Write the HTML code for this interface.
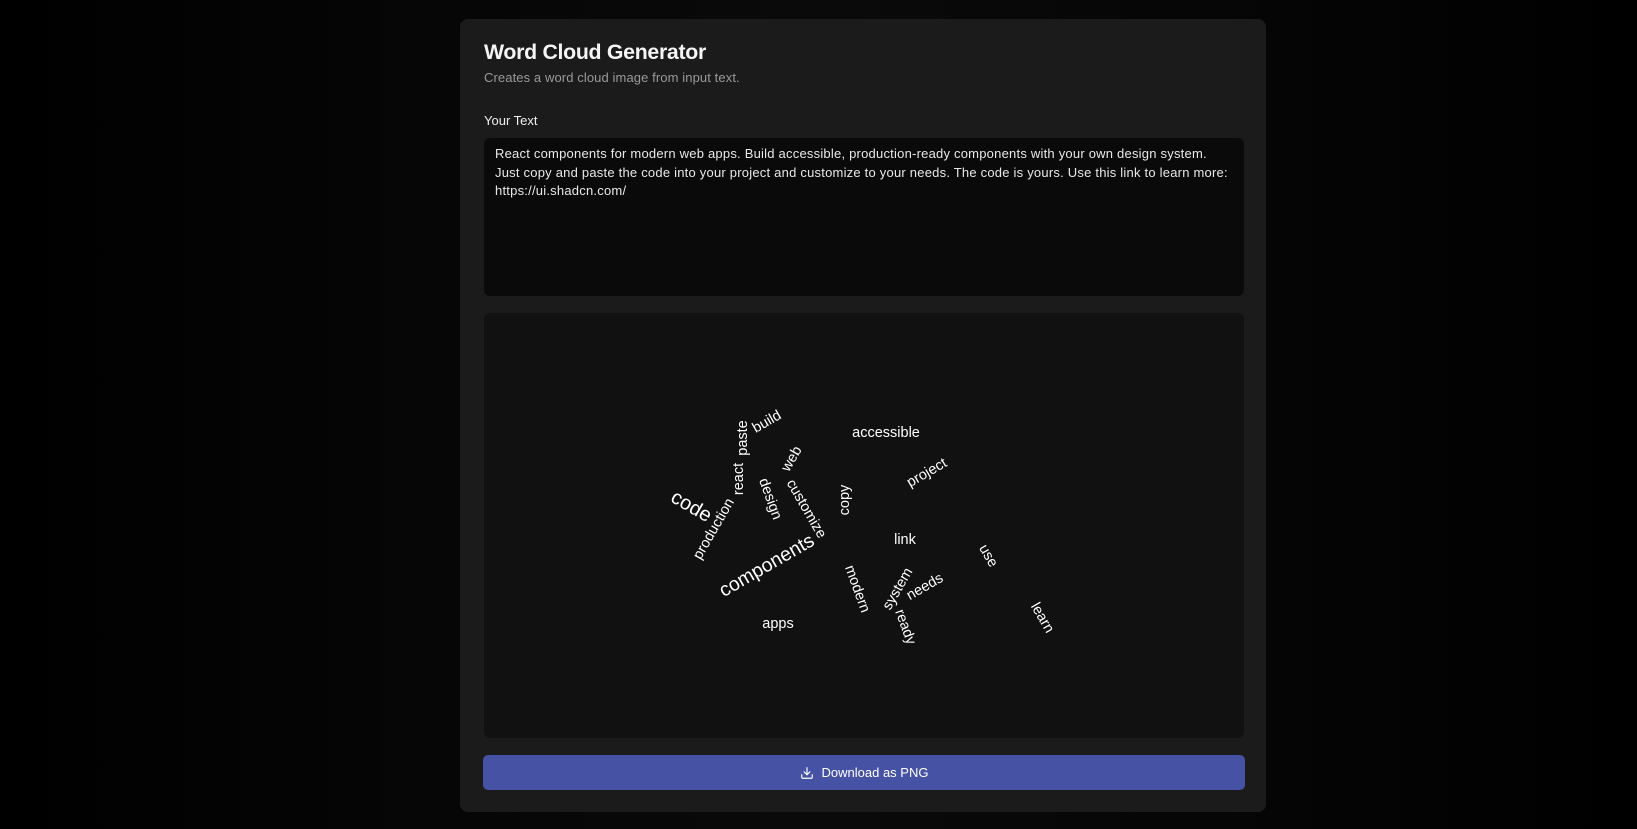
<!DOCTYPE html>
<html><head><meta charset="utf-8"><style>
html,body{margin:0;padding:0;}
body{width:1637px;height:829px;overflow:hidden;background:linear-gradient(90deg,#000 0%,#050505 22%,#0a0a0b 50%,#050505 78%,#000 100%);font-family:"Liberation Sans",sans-serif;position:relative;}
.card{position:absolute;left:460px;top:19px;width:806px;height:793px;background:#1b1b1b;border-radius:8px;}
.t{position:absolute;left:484px;top:40px;font-size:21.3px;font-weight:bold;color:#f5f5f5;letter-spacing:-0.3px;}
.s{position:absolute;left:484px;top:70px;font-size:13px;color:#9a9a9a;letter-spacing:0.1px;}
.l{position:absolute;left:484px;top:113px;font-size:13px;color:#eee;font-weight:500;}
.ta{position:absolute;left:484px;top:138px;width:760px;height:158px;background:#0a0a0a;border-radius:6px;}
.tt{position:absolute;left:495px;top:145px;font-size:13px;line-height:18.5px;color:#e8e8e8;white-space:nowrap;letter-spacing:0.22px;}
.cv{position:absolute;left:484px;top:313px;width:760px;height:425px;background:#111;border-radius:6px;}
.w{position:absolute;color:#fff;font-size:14.5px;white-space:nowrap;transform-origin:center;}
.btn{position:absolute;left:483px;top:755px;width:762px;height:35px;background:#4652a4;border-radius:5px;color:#fff;font-size:13px;font-weight:500;display:flex;align-items:center;justify-content:center;gap:8px;}
</style></head><body>
<div class="card"></div>
<div class="t">Word Cloud Generator</div>
<div class="s">Creates a word cloud image from input text.</div>
<div class="l">Your Text</div>
<div class="ta"></div>
<div class="tt">React components for modern web apps. Build accessible, production-ready components with your own design system.<br>Just copy and paste the code into your project and customize to your needs. The code is yours. Use this link to learn more:<br>https://ui.shadcn.com/</div>
<div class="cv"></div>
<div class="w" style="left:767px;top:422px;transform:translate(-50%,-50%) rotate(-30deg)">build</div>
<div class="w" style="left:743px;top:438px;transform:translate(-50%,-50%) rotate(-90deg)">paste</div>
<div class="w" style="left:886px;top:433px;transform:translate(-50%,-50%)">accessible</div>
<div class="w" style="left:792px;top:459px;transform:translate(-50%,-50%) rotate(-60deg)">web</div>
<div class="w" style="left:739px;top:479px;transform:translate(-50%,-50%) rotate(-90deg)">react</div>
<div class="w" style="left:927px;top:473px;transform:translate(-50%,-50%) rotate(-30deg)">project</div>
<div class="w" style="left:770px;top:499px;transform:translate(-50%,-50%) rotate(70deg)">design</div>
<div class="w" style="left:806px;top:509px;transform:translate(-50%,-50%) rotate(60deg)">customize</div>
<div class="w" style="left:845px;top:500px;transform:translate(-50%,-50%) rotate(-90deg)">copy</div>
<div class="w" style="left:691px;top:507px;font-size:20px;transform:translate(-50%,-50%) rotate(30deg)">code</div>
<div class="w" style="left:714px;top:529px;transform:translate(-50%,-50%) rotate(-60deg)">production</div>
<div class="w" style="left:905px;top:540px;transform:translate(-50%,-50%)">link</div>
<div class="w" style="left:988px;top:556px;transform:translate(-50%,-50%) rotate(60deg)">use</div>
<div class="w" style="left:767px;top:566px;font-size:19.5px;transform:translate(-50%,-50%) rotate(-30deg)">components</div>
<div class="w" style="left:857px;top:589px;transform:translate(-50%,-50%) rotate(70deg)">modern</div>
<div class="w" style="left:898px;top:589px;transform:translate(-50%,-50%) rotate(-60deg)">system</div>
<div class="w" style="left:925px;top:587px;transform:translate(-50%,-50%) rotate(-30deg)">needs</div>
<div class="w" style="left:905px;top:627px;transform:translate(-50%,-50%) rotate(70deg)">ready</div>
<div class="w" style="left:778px;top:624px;transform:translate(-50%,-50%)">apps</div>
<div class="w" style="left:1042px;top:618px;transform:translate(-50%,-50%) rotate(60deg)">learn</div>
<div class="btn"><svg width="14" height="14" viewBox="0 0 24 24" fill="none" stroke="#fff" stroke-width="2" stroke-linecap="round" stroke-linejoin="round"><path d="M21 15v4a2 2 0 0 1-2 2H5a2 2 0 0 1-2-2v-4"/><path d="M7 10l5 5 5-5"/><path d="M12 15V3"/></svg><span>Download as PNG</span></div>
</body></html>
